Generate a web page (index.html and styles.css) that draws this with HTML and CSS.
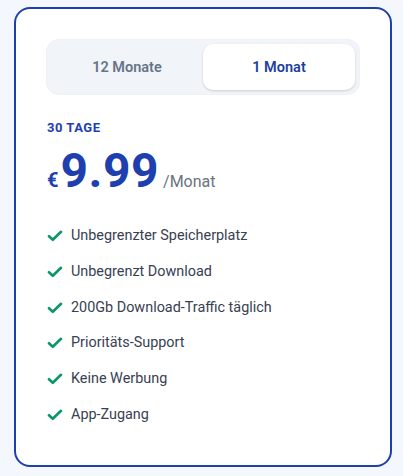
FILE: index.html
```html
<!DOCTYPE html>
<html lang="de">
<head>
<meta charset="utf-8">
<title>Preisplan</title>
<link rel="stylesheet" href="styles.css">
</head>
<body>
<div class="card">
  <div class="toggle">
    <button class="tab">12 Monate</button>
    <button class="tab tab-active">1 Monat</button>
  </div>
  <div class="period">30 TAGE</div>
  <div class="price">
    <span class="currency">€</span><span class="amount">9.99</span><span class="per">/Monat</span>
  </div>
  <ul class="features">
    <li class="feature"><svg class="check" viewBox="0 0 16 12" width="16" height="12"><path d="M2 6.2 L5.8 9.8 L14 1.8" fill="none" stroke="#0b9669" stroke-width="2.6" stroke-linecap="round" stroke-linejoin="round"/></svg><span>Unbegrenzter Speicherplatz</span></li>
    <li class="feature"><svg class="check" viewBox="0 0 16 12" width="16" height="12"><path d="M2 6.2 L5.8 9.8 L14 1.8" fill="none" stroke="#0b9669" stroke-width="2.6" stroke-linecap="round" stroke-linejoin="round"/></svg><span>Unbegrenzt Download</span></li>
    <li class="feature"><svg class="check" viewBox="0 0 16 12" width="16" height="12"><path d="M2 6.2 L5.8 9.8 L14 1.8" fill="none" stroke="#0b9669" stroke-width="2.6" stroke-linecap="round" stroke-linejoin="round"/></svg><span>200Gb Download-Traffic täglich</span></li>
    <li class="feature"><svg class="check" viewBox="0 0 16 12" width="16" height="12"><path d="M2 6.2 L5.8 9.8 L14 1.8" fill="none" stroke="#0b9669" stroke-width="2.6" stroke-linecap="round" stroke-linejoin="round"/></svg><span>Prioritäts-Support</span></li>
    <li class="feature"><svg class="check" viewBox="0 0 16 12" width="16" height="12"><path d="M2 6.2 L5.8 9.8 L14 1.8" fill="none" stroke="#0b9669" stroke-width="2.6" stroke-linecap="round" stroke-linejoin="round"/></svg><span>Keine Werbung</span></li>
    <li class="feature"><svg class="check" viewBox="0 0 16 12" width="16" height="12"><path d="M2 6.2 L5.8 9.8 L14 1.8" fill="none" stroke="#0b9669" stroke-width="2.6" stroke-linecap="round" stroke-linejoin="round"/></svg><span>App-Zugang</span></li>
  </ul>
</div>
</body>
</html>
```
FILE: styles.css
```css
html, body {
  margin: 0;
  padding: 0;
}
body {
  background: #f4f7fd;
  font-family: Roboto, "Liberation Sans", Arial, sans-serif;
  padding: 7px 11px 9px 14px;
}
.card {
  box-sizing: border-box;
  width: 378px;
  height: 460px;
  background: #ffffff;
  border: 2px solid #1e40af;
  border-radius: 16px;
  padding: 31px 31px 31px 31px;
}
.toggle {
  display: grid;
  grid-template-columns: 1fr 1fr;
  padding: 4px;
  height: 54px;
  box-sizing: border-box;
  background: #f1f4f9;
  border-radius: 12px;
  box-shadow: 0 0 0 1px #eef1f6;
}
.tab {
  border: 0;
  background: transparent;
  font-family: inherit;
  font-size: 14.5px;
  font-weight: 600;
  color: #667488;
  border-radius: 10px;
  padding: 0;
  cursor: pointer;
}
.tab-active {
  background: #ffffff;
  color: #1e3fa0;
  box-shadow: 0 1px 3px rgba(30, 41, 59, 0.12), 0 1px 2px rgba(30, 41, 59, 0.06);
}
.period {
  margin-top: 26px;
  font-size: 13px;
  line-height: 16px;
  font-weight: 700;
  letter-spacing: 0.5px;
  color: #1e40af;
}
.price {
  display: flex;
  align-items: baseline;
  margin-top: 11px;
  line-height: 48px;
  color: #1e40af;
}
.currency {
  font-size: 20px;
  font-weight: 700;
  margin-right: 2px;
}
.amount {
  font-size: 48px;
  font-weight: 700;
  letter-spacing: 0.5px;
}
.per {
  font-size: 16px;
  color: #6b7280;
  margin-left: 4px;
}
.features {
  list-style: none;
  margin: 18px 0 0 0;
  padding: 0;
  display: flex;
  flex-direction: column;
  gap: 11.8px;
}
.feature {
  display: flex;
  align-items: center;
  gap: 8px;
  font-size: 14.4px;
  line-height: 24px;
  color: #374151;
}
.check {
  flex: none;
  display: block;
}
```
